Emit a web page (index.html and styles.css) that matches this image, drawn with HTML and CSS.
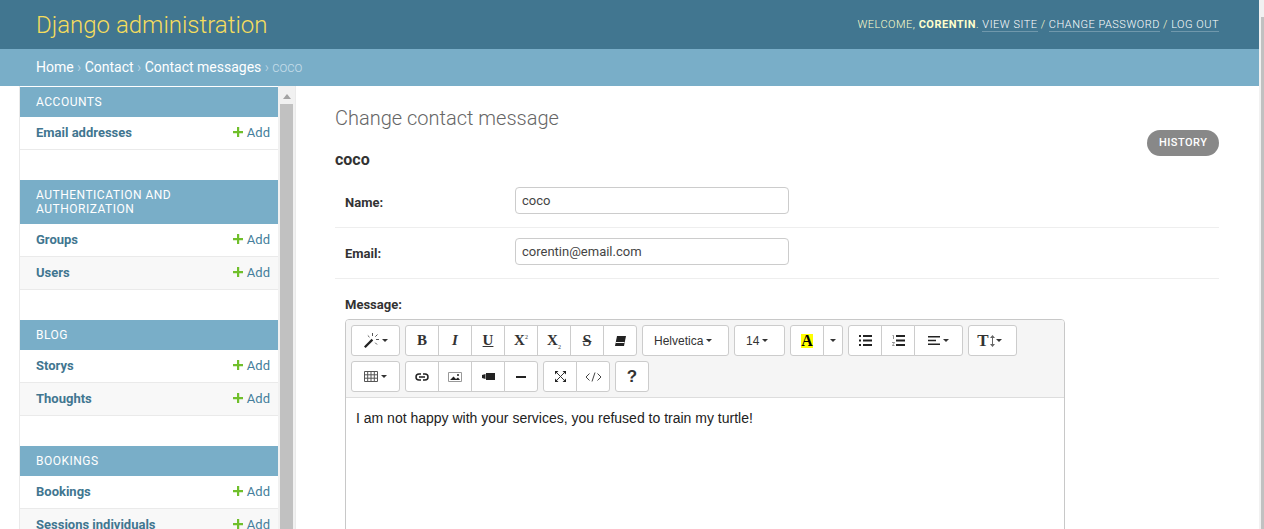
FILE: index.html
```html
<!DOCTYPE html>
<html>
  <head>
    <meta charset="utf-8">
    <title>Change contact message | Django site admin</title>
    <link rel="stylesheet" href="styles.css">
  </head>
  <body>
    <div class="page">
      <header class="site-header">
        <h1 class="brand">Django administration</h1>
        <div class="user-tools">
          Welcome, <strong>Corentin</strong>.
          <a href="#">View site</a> / <a href="#">Change password</a> / <a href="#">Log out</a>
        </div>
      </header>
      <div class="breadcrumbs">
        <a href="#">Home</a> › <a href="#">Contact</a> › <a href="#">Contact messages</a> › coco
      </div>
      <div class="main">
        <nav class="sidebar">
          <div class="sidebar-list">
            <section class="module">
              <h2 class="module-title">Accounts</h2>
              <div class="model-row"><a class="model-name" href="#">Email addresses</a><a class="add-link" href="#"><svg class="plus" viewBox="0 0 10 10"><path d="M4 0h2.2v4H10v2.2H6.2V10H4V6.2H0V4h4z"/></svg>Add</a></div>
            </section>
            <section class="module">
              <h2 class="module-title">Authentication and Authorization</h2>
              <div class="model-row"><a class="model-name" href="#">Groups</a><a class="add-link" href="#"><svg class="plus" viewBox="0 0 10 10"><path d="M4 0h2.2v4H10v2.2H6.2V10H4V6.2H0V4h4z"/></svg>Add</a></div>
              <div class="model-row alt"><a class="model-name" href="#">Users</a><a class="add-link" href="#"><svg class="plus" viewBox="0 0 10 10"><path d="M4 0h2.2v4H10v2.2H6.2V10H4V6.2H0V4h4z"/></svg>Add</a></div>
            </section>
            <section class="module">
              <h2 class="module-title">Blog</h2>
              <div class="model-row"><a class="model-name" href="#">Storys</a><a class="add-link" href="#"><svg class="plus" viewBox="0 0 10 10"><path d="M4 0h2.2v4H10v2.2H6.2V10H4V6.2H0V4h4z"/></svg>Add</a></div>
              <div class="model-row alt"><a class="model-name" href="#">Thoughts</a><a class="add-link" href="#"><svg class="plus" viewBox="0 0 10 10"><path d="M4 0h2.2v4H10v2.2H6.2V10H4V6.2H0V4h4z"/></svg>Add</a></div>
            </section>
            <section class="module">
              <h2 class="module-title">Bookings</h2>
              <div class="model-row"><a class="model-name" href="#">Bookings</a><a class="add-link" href="#"><svg class="plus" viewBox="0 0 10 10"><path d="M4 0h2.2v4H10v2.2H6.2V10H4V6.2H0V4h4z"/></svg>Add</a></div>
              <div class="model-row alt"><a class="model-name" href="#">Sessions individuals</a><a class="add-link" href="#"><svg class="plus" viewBox="0 0 10 10"><path d="M4 0h2.2v4H10v2.2H6.2V10H4V6.2H0V4h4z"/></svg>Add</a></div>
            </section>
          </div>
          <div class="fake-scrollbar">
            <svg class="scroll-arrow" viewBox="0 0 8 5"><path d="M4 0l4 5H0z"/></svg>
            <div class="scroll-thumb"></div>
          </div>
        </nav>
        <main class="content">
          <div class="title-row">
            <h1 class="page-title">Change contact message</h1>
            <a class="history" href="#">History</a>
          </div>
          <h2 class="object-name">coco</h2>
          <div class="form-row">
            <label class="field-label">Name:</label>
            <input class="text-input" type="text" value="coco">
          </div>
          <div class="form-row">
            <label class="field-label">Email:</label>
            <input class="text-input" type="text" value="corentin@email.com">
          </div>
          <div class="message-row">
            <label class="field-label">Message:</label>
            <div class="editor">
              <div class="toolbar">
                <div class="toolbar-row">
                  <div class="tool-group">
                    <button class="tool wide"><svg width="15" height="15" viewBox="0 0 15 15"><path d="M0 13.400L7.600 5.800l1.600 1.600L1.600 15z" fill="#222"/><path d="M8.500 0v3M13.500 1.500l-2.200 2.200M15 6.500h-3M13 11.500l-1.800-1.800M3.800 2.500l1.700 1.700" stroke="#555" fill="none"/></svg><i class="caret"></i></button>
                  </div>
                  <div class="tool-group">
                    <button class="tool"><span class="glyph">B</span></button>
                    <button class="tool"><span class="glyph italic">I</span></button>
                    <button class="tool"><span class="glyph under">U</span></button>
                    <button class="tool"><span class="glyph">X<sup class="mini">2</sup></span></button>
                    <button class="tool"><span class="glyph">X<sub class="mini">2</sub></span></button>
                    <button class="tool"><span class="glyph strike">S</span></button>
                    <button class="tool"><svg width="12" height="10" viewBox="0 0 12 10"><path d="M3 0H12l-2 10H1z" fill="#222"/><path d="M1.500 6.500h9" stroke="#f5f5f5" fill="none"/></svg></button>
                  </div>
                  <div class="tool-group">
                    <button class="tool font-select">Helvetica<i class="caret"></i></button>
                  </div>
                  <div class="tool-group">
                    <button class="tool size-select">14<i class="caret"></i></button>
                  </div>
                  <div class="tool-group">
                    <button class="tool"><span class="color-a">A</span></button>
                    <button class="tool narrow"><i class="caret flush"></i></button>
                  </div>
                  <div class="tool-group">
                    <button class="tool"><svg width="13" height="11" viewBox="0 0 13 11"><path d="M0 0h2v2H0zM4 0h9v2H4zM0 4.500h2v2H0zM4 4.500h9v2H4zM0 9h2v2H0zM4 9h9v2H4z" fill="#222"/></svg></button>
                    <button class="tool"><svg width="13" height="11" viewBox="0 0 13 11"><path d="M4 0h9v2H4zM4 4.500h9v2H4zM4 9h9v2H4z" fill="#222"/><path d="M.5 .5h1v3.500M0 7.500h2.500L.5 10.500h2" stroke="#666" stroke-width=".7" fill="none"/></svg></button>
                    <button class="tool wide"><svg width="12" height="9" viewBox="0 0 12 9"><path d="M0 0h12v1.500H0zM0 3.700h8v1.500H0zM0 7.500h12V9H0z" fill="#222"/></svg><i class="caret"></i></button>
                  </div>
                  <div class="tool-group">
                    <button class="tool wide line-height"><span class="glyph big">T</span><svg class="height-arrow" width="5" height="12" viewBox="0 0 5 12"><path d="M2.500 0L5 3H3v6h2l-2.500 3L0 9h2V3H0z" fill="#666"/></svg><i class="caret tight"></i></button>
                  </div>
                </div>
                <div class="toolbar-row">
                  <div class="tool-group">
                    <button class="tool wide"><svg width="14" height="11" viewBox="0 0 14 11"><path d="M.5 .5h13v10H.5zM.5 3.800h13M.5 7.200h13M3.700 .5v10M7 .5v10M10.300 .5v10" stroke="#555" fill="none"/></svg><i class="caret"></i></button>
                  </div>
                  <div class="tool-group">
                    <button class="tool"><svg width="14" height="8" viewBox="0 0 14 8"><path d="M6 1H4a3 3 0 000 6h2M8 1h2a3 3 0 010 6H8M4 4h6" stroke="#222" stroke-width="1.500" fill="none"/></svg></button>
                    <button class="tool"><svg width="14" height="10" viewBox="0 0 14 10"><path d="M.5 .5h13v9H.5z" stroke="#999" fill="none"/><path d="M2 8l3.500-3.500L8 7l2-1.500L12 8z" fill="#222"/><circle cx="10" cy="3" r="1" fill="#222"/></svg></button>
                    <button class="tool"><svg width="13" height="7" viewBox="0 0 13 7"><path d="M4 0h9v7H4zM0 2l3.500-1v5L0 5z" fill="#222"/></svg></button>
                    <button class="tool"><svg width="10" height="2" viewBox="0 0 10 2"><path d="M0 0h10v2H0z" fill="#222"/></svg></button>
                  </div>
                  <div class="tool-group">
                    <button class="tool"><svg width="11" height="11" viewBox="0 0 11 11"><path d="M1.500 1.500l8 8M9.500 1.500l-8 8" stroke="#333" fill="none"/><path d="M0 0h3.500L0 3.500zM11 0v3.500L7.500 0zM0 11V7.500L3.500 11zM11 11H7.500L11 7.500z" fill="#222"/></svg></button>
                    <button class="tool"><svg width="17" height="10" viewBox="0 0 17 10"><path d="M4.500 1.500L1 5l3.500 3.500M12.500 1.500L16 5l-3.500 3.500M10 .5L7 9.500" stroke="#444" fill="none"/></svg></button>
                  </div>
                  <div class="tool-group">
                    <button class="tool"><span class="help">?</span></button>
                  </div>
                </div>
              </div>
              <div class="editor-body">I am not happy with your services, you refused to train my turtle!</div>
            </div>
          </div>
        </main>
      </div>
    </div>
    <div class="page-scrollbar"><div class="page-thumb"></div></div>
  </body>
</html>
```

FILE: styles.css
```css
html, body {
  margin: 0;
  height: 529px;
  overflow: hidden;
}

body {
  display: flex;
  font-family: Roboto, "Liberation Sans", sans-serif;
  font-size: 14px;
  color: #333333;
  background-color: #ffffff;
}

a {
  text-decoration: none;
}

.page {
  flex: 1;
  min-width: 0;
  display: flex;
  flex-direction: column;
}

.page-scrollbar {
  width: 5px;
  box-sizing: border-box;
  padding: 17px 0 0 2px;
  background-color: #f1f1f1;
}

.page-thumb {
  height: 512px;
  background-color: #c1c1c1;
}

.site-header {
  height: 49px;
  box-sizing: border-box;
  padding: 0 40px 0 36px;
  display: flex;
  justify-content: space-between;
  align-items: center;
  background-color: #417690;
}

.brand {
  margin: 0;
  font-size: 24px;
  font-weight: 300;
  color: #f5dd5d;
}

.user-tools {
  font-size: 11px;
  font-weight: 300;
  letter-spacing: 0.5px;
  text-transform: uppercase;
  color: #ffffcc;
}

.user-tools strong {
  font-weight: 700;
}

.user-tools a {
  color: #ffffff;
  border-bottom: 1px solid rgba(255, 255, 255, 0.25);
}

.breadcrumbs {
  height: 37px;
  box-sizing: border-box;
  padding: 0 36px;
  line-height: 37px;
  font-size: 14px;
  font-weight: 300;
  color: #c4dce8;
  background-color: #79aec8;
}

.breadcrumbs a {
  color: #ffffff;
  font-weight: 400;
}

.main {
  flex: 1;
  min-height: 0;
  display: flex;
}

.sidebar {
  width: 275px;
  margin-left: 19px;
  display: flex;
  border-left: 1px solid #eaeaea;
  border-right: 1px solid #eaeaea;
}

.sidebar-list {
  width: 258px;
  padding-top: 1px;
  overflow: hidden;
}

.fake-scrollbar {
  width: 17px;
  padding-top: 8px;
  box-sizing: border-box;
  background-color: #f1f1f1;
  display: flex;
  flex-direction: column;
  align-items: center;
}

.scroll-arrow {
  width: 8px;
  height: 5px;
  fill: #a3a3a3;
  margin-bottom: 5px;
}

.scroll-thumb {
  flex: 1;
  width: 13px;
  background-color: #c1c1c1;
}

.module {
  margin-bottom: 30px;
}

.module-title {
  margin: 0;
  padding: 8px 16px;
  font-size: 12px;
  line-height: 14px;
  font-weight: 400;
  letter-spacing: 0.5px;
  text-transform: uppercase;
  color: #ffffff;
  background-color: #79aec8;
}

.model-row {
  height: 33px;
  box-sizing: border-box;
  padding: 0 8px 2px 16px;
  display: flex;
  justify-content: space-between;
  align-items: center;
  font-size: 13px;
  border-bottom: 1px solid #eaeaea;
}

.model-row.alt {
  background-color: #f8f8f8;
}

.model-name {
  color: #417690;
  font-weight: 700;
}

.add-link {
  display: flex;
  align-items: center;
  gap: 4px;
  color: #447e9b;
}

.plus {
  width: 10px;
  height: 10px;
  fill: #70bf2b;
}

.content {
  flex: 1;
  min-width: 0;
  padding: 20px 40px 0 39px;
}

.title-row {
  display: flex;
  justify-content: space-between;
  align-items: flex-start;
}

.page-title {
  margin: 0;
  font-size: 20px;
  line-height: 24px;
  font-weight: 300;
  color: #666666;
}

.history {
  margin-top: 24px;
  padding: 0 11.5px;
  height: 26px;
  line-height: 25px;
  border-radius: 13px;
  font-size: 11px;
  font-weight: 500;
  letter-spacing: 0.5px;
  text-transform: uppercase;
  color: #ffffff;
  background-color: #888888;
}

.object-name {
  margin: -4px 0 9px;
  font-size: 16px;
  line-height: 16px;
  font-weight: 700;
  color: #333333;
}

.form-row {
  display: flex;
  align-items: center;
  height: 51px;
  box-sizing: border-box;
  padding: 0 10px;
  font-size: 13px;
  border-bottom: 1px solid #eeeeee;
}

.field-label {
  width: 170px;
  font-weight: 700;
  font-size: 13px;
  color: #333333;
}

.text-input {
  width: 274px;
  height: 27px;
  box-sizing: border-box;
  margin-bottom: 4px;
  padding: 0 6px;
  font-family: Roboto, "Liberation Sans", sans-serif;
  font-size: 13px;
  color: #444444;
  border: 1px solid #cccccc;
  border-radius: 4px;
}

.message-row {
  padding: 18px 10px 0;
}

.message-row .field-label {
  display: block;
  margin-bottom: 7px;
}

.editor {
  width: 720px;
  height: 300px;
  box-sizing: border-box;
  border: 1px solid #c8c8c8;
  border-radius: 4px;
  background-color: #ffffff;
}

.toolbar {
  height: 78px;
  box-sizing: border-box;
  padding: 5px 5px 0;
  display: flex;
  flex-direction: column;
  gap: 5px;
  background-color: #f5f5f5;
  border-bottom: 1px solid #dddddd;
  border-radius: 3px 3px 0 0;
}

.toolbar-row {
  display: flex;
  gap: 5px;
}

.tool-group {
  display: flex;
}

.tool {
  width: 34px;
  height: 31px;
  box-sizing: border-box;
  margin: 0 0 0 -1px;
  padding: 0;
  display: flex;
  align-items: center;
  justify-content: center;
  font-family: "Liberation Sans", Arial, sans-serif;
  font-size: 12px;
  color: #333333;
  background-color: #ffffff;
  border: 1px solid #cccccc;
}

.tool:first-child {
  margin-left: 0;
  border-radius: 3px 0 0 3px;
}

.tool:last-child {
  border-radius: 0 3px 3px 0;
}

.tool:only-child {
  border-radius: 3px;
}

.tool.wide {
  width: 49px;
}

.tool.line-height {
  padding-right: 6px;
}

.tool.narrow {
  width: 20px;
}

.tool.font-select,
.tool.size-select {
  justify-content: flex-start;
  padding-left: 11px;
}

.tool.font-select {
  width: 87px;
}

.tool.size-select {
  width: 51px;
}

.caret {
  width: 0;
  height: 0;
  margin-left: 3px;
  border-top: 3.5px solid #333333;
  border-left: 3px solid transparent;
  border-right: 3px solid transparent;
}

.caret.flush {
  margin-left: 0;
}

.caret.tight {
  margin-left: 1px;
}

.height-arrow {
  margin-left: 1px;
}

.glyph {
  font-family: "Liberation Serif", serif;
  font-size: 15px;
  font-weight: 700;
  color: #333333;
}

.big {
  font-size: 17px;
}

.italic {
  font-style: italic;
}

.under {
  text-decoration: underline;
}

.strike {
  text-decoration: line-through;
  font-size: 16px;
}

.mini {
  font-size: 6px;
  font-weight: 400;
  line-height: 0;
}

.color-a {
  width: 12px;
  font-family: "Liberation Serif", serif;
  font-size: 16px;
  line-height: 14px;
  font-weight: 700;
  color: #000000;
  background-color: #ffff00;
}

.help {
  font-size: 17px;
  font-weight: 700;
}

.editor-body {
  padding: 10px;
  font-family: "Liberation Sans", Arial, sans-serif;
  font-size: 14px;
  line-height: 20px;
  color: #222222;
}
```
